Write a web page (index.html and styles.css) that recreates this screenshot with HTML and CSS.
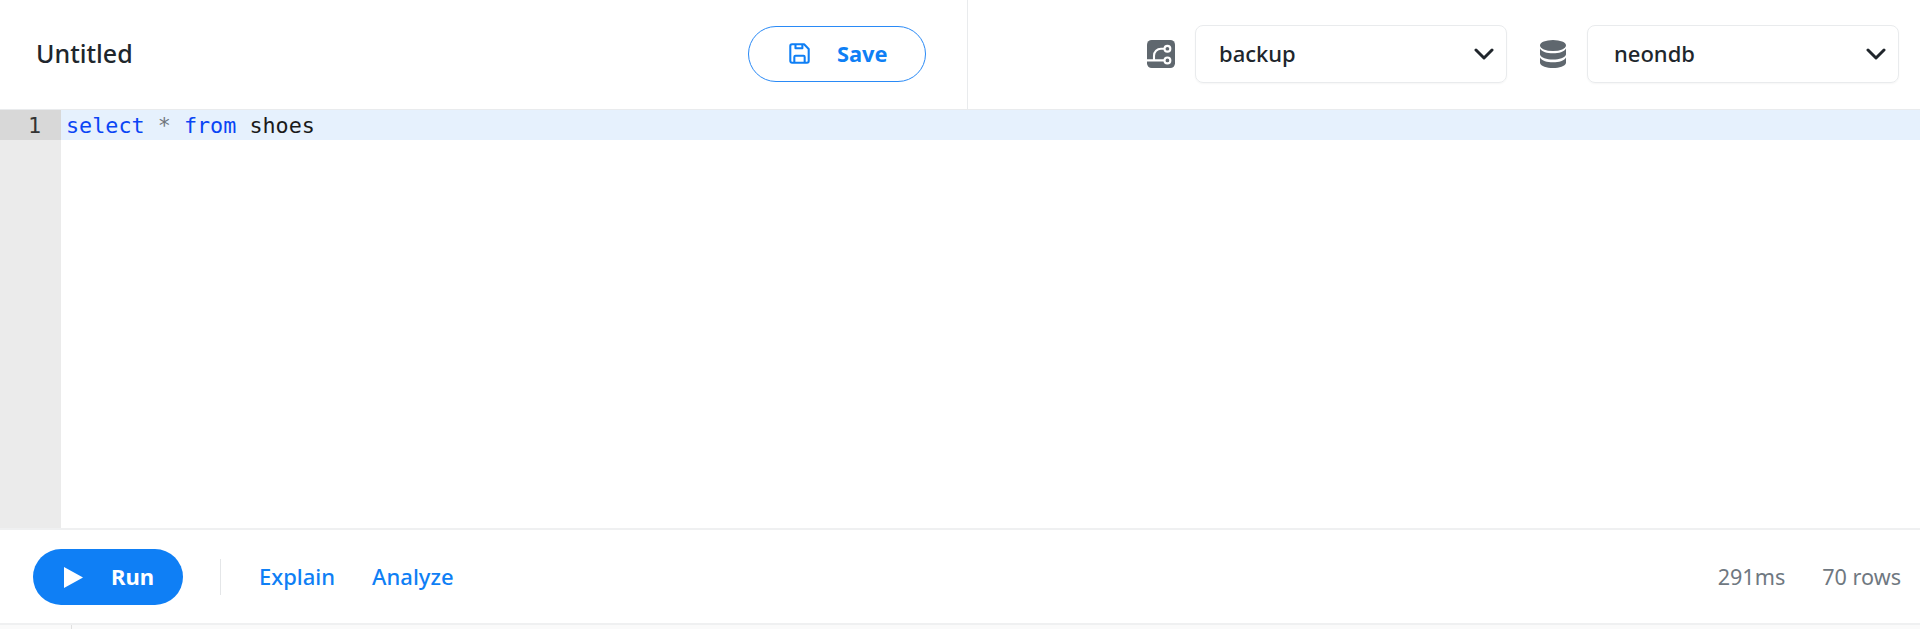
FILE: index.html
```html
<!DOCTYPE html>
<html lang="en">
<head>
<meta charset="utf-8">
<title>Untitled</title>
<link rel="stylesheet" href="styles.css">
</head>
<body>
<div class="page">
  <header class="header">
    <div class="title-pane">
      <div class="title">Untitled</div>
      <button class="save-btn">
        <svg class="save-icon" viewBox="0 0 20 20" fill="none" stroke="#0f7ff5" stroke-width="1.800" stroke-linejoin="round"><path d="M2 3.500A1.500 1.500 0 0 1 3.500 2H14l4 4v10.500a1.500 1.500 0 0 1-1.500 1.500H3.500A1.500 1.500 0 0 1 2 16.500Z"/><path d="M6.500 2v3.500h6V2"/><path d="M5.500 18v-5a1 1 0 0 1 1-1h7a1 1 0 0 1 1 1v5"/></svg>
        <span>Save</span>
      </button>
    </div>
    <div class="select-pane">
      <svg class="ctx-icon" viewBox="0 0 24 24"><rect x="0" y="0" width="24" height="24" rx="4" fill="#5f676e"/><path d="M0 17.500h15M6 17.500v-4a6 6 0 0 1 6-6h3" fill="none" stroke="#fff" stroke-width="1.800"/><circle cx="17.500" cy="7.500" r="2.500" fill="#5f676e" stroke="#fff" stroke-width="1.800"/><circle cx="17.500" cy="17.500" r="2.500" fill="#5f676e" stroke="#fff" stroke-width="1.800"/></svg>
      <div class="select">
        <span class="select-value">backup</span>
        <svg class="chevron" viewBox="0 0 20 12" fill="none" stroke="#20262c" stroke-width="3" stroke-linecap="round" stroke-linejoin="round"><path d="M2 2l8 8 8-8"/></svg>
      </div>
      <svg class="ctx-icon db-icon" viewBox="0 0 26 28"><ellipse cx="13" cy="5.500" rx="13" ry="5.500" fill="#5f676e"/><path d="M0 8.500c2 3.500 7 4.700 13 4.700s11-1.200 13-4.700v6c-1 3.500-6.500 5-13 5s-12-1.500-13-5Z" fill="#5f676e"/><path d="M0 17.500c2 3.500 7 4.700 13 4.700s11-1.200 13-4.700v5.500c-1 3.500-6.500 5-13 5s-12-1.500-13-5Z" fill="#5f676e"/></svg>
      <div class="select select-db">
        <span class="select-value">neondb</span>
        <svg class="chevron" viewBox="0 0 20 12" fill="none" stroke="#20262c" stroke-width="3" stroke-linecap="round" stroke-linejoin="round"><path d="M2 2l8 8 8-8"/></svg>
      </div>
    </div>
  </header>
  <main class="editor">
    <div class="gutter"><div class="gutter-active">1</div></div>
    <div class="code">
      <div class="code-line"><span class="kw">select</span> <span class="op">*</span> <span class="kw">from</span> shoes</div>
    </div>
  </main>
  <section class="toolbar">
    <button class="run-btn">
      <svg class="play" viewBox="0 0 18 20" preserveAspectRatio="none"><path d="M0 0L18 10L0 20Z" fill="#fff"/></svg>
      <span class="run-label">Run</span>
    </button>
    <div class="divider"></div>
    <a class="link link-explain">Explain</a>
    <a class="link">Analyze</a>
    <div class="stats"><span>291ms</span><span>70 rows</span></div>
  </section>
  <div class="strip"><div class="strip-left"></div></div>
</div>
</body>
</html>
```
FILE: styles.css
```css
* { box-sizing: border-box; }
html, body { margin: 0; height: 100%; background: #fff; overflow: hidden; }
body { font-family: "Noto Sans", sans-serif; color: #20262c; }
.page { display: flex; flex-direction: column; height: 629px; }

.header { display: flex; height: 110px; border-bottom: 1px solid #e9ebed; flex: none; }
.title-pane { width: 968px; border-right: 1px solid #e9ebed; display: flex; align-items: center; justify-content: space-between; padding: 0 41px 2px 36px; }
.title { font-size: 25px; font-weight: 500; padding-bottom: 2px; }
.save-btn { width: 178px; height: 56px; border: 1px solid #2a8af6; border-radius: 28px; background: #fff; color: #0f7ff5; font: 700 21.800px "Noto Sans", sans-serif; display: flex; align-items: center; padding: 0 0 0 39px; gap: 26px; }
.save-icon { width: 23px; height: 23px; flex: none; }

.select-pane { flex: 1; display: flex; align-items: center; padding: 0 0 2px 179px; }
.ctx-icon { width: 28px; height: 28px; flex: none; }
.db-icon { margin-left: 32px; }
.select { width: 312px; height: 58px; margin-left: 20px; border: 1px solid #e9ebed; border-radius: 8px; box-shadow: 0 1px 2px rgba(0,0,0,.04); display: flex; align-items: center; justify-content: space-between; padding: 0 12px 0 23px; font-size: 22px; font-weight: 500; }
.select-db { padding-left: 26px; }
.select-value { padding-bottom: 2px; }
.chevron { width: 20px; height: 12px; flex: none; }

.editor { flex: 1; display: flex; min-height: 0; }
.gutter { width: 61px; background: #ebebeb; flex: none; }
.gutter-active { height: 30px; background: #d8d8d8; color: #333; font: 21.750px/30px "DejaVu Sans Mono", monospace; text-align: right; padding: 1px 20px 0 0; }
.code { flex: 1; }
.code-line { height: 30px; background: #e6f1fd; padding: 1px 0 0 5px; font: 21.750px/30px "DejaVu Sans Mono", monospace; color: #1a1a1a; white-space: pre; }
.kw { color: #0a45f5; }
.op { color: #70767c; }

.toolbar { height: 97px; flex: none; border-top: 2px solid #eff0f1; border-bottom: 2px solid #eff0f1; display: flex; align-items: center; padding: 0 19px 0 33px; }
.run-btn { width: 150px; height: 56px; border: 0; border-radius: 28px; background: #0f7ff5; color: #fff; font: 700 22px "Noto Sans", sans-serif; display: flex; align-items: center; padding: 0 0 0 31px; gap: 28px; }
.run-label { padding-bottom: 2px; }
.play { width: 19px; height: 21px; flex: none; margin-top: 2px; }
.divider { width: 1px; height: 36px; background: #e4e6e8; margin: 0 38px 0 37px; }
.link { color: #0f7ff5; font-size: 22px; font-weight: 500; padding-bottom: 2px; }
.link-explain { margin-right: 37px; }
.stats { margin-left: auto; display: flex; gap: 37px; color: #6f7881; font-size: 21.600px; }

.strip { height: 4px; flex: none; background: #fafafa; }
.strip-left { width: 72px; height: 4px; border-right: 1px solid #e0e0e0; }
```
